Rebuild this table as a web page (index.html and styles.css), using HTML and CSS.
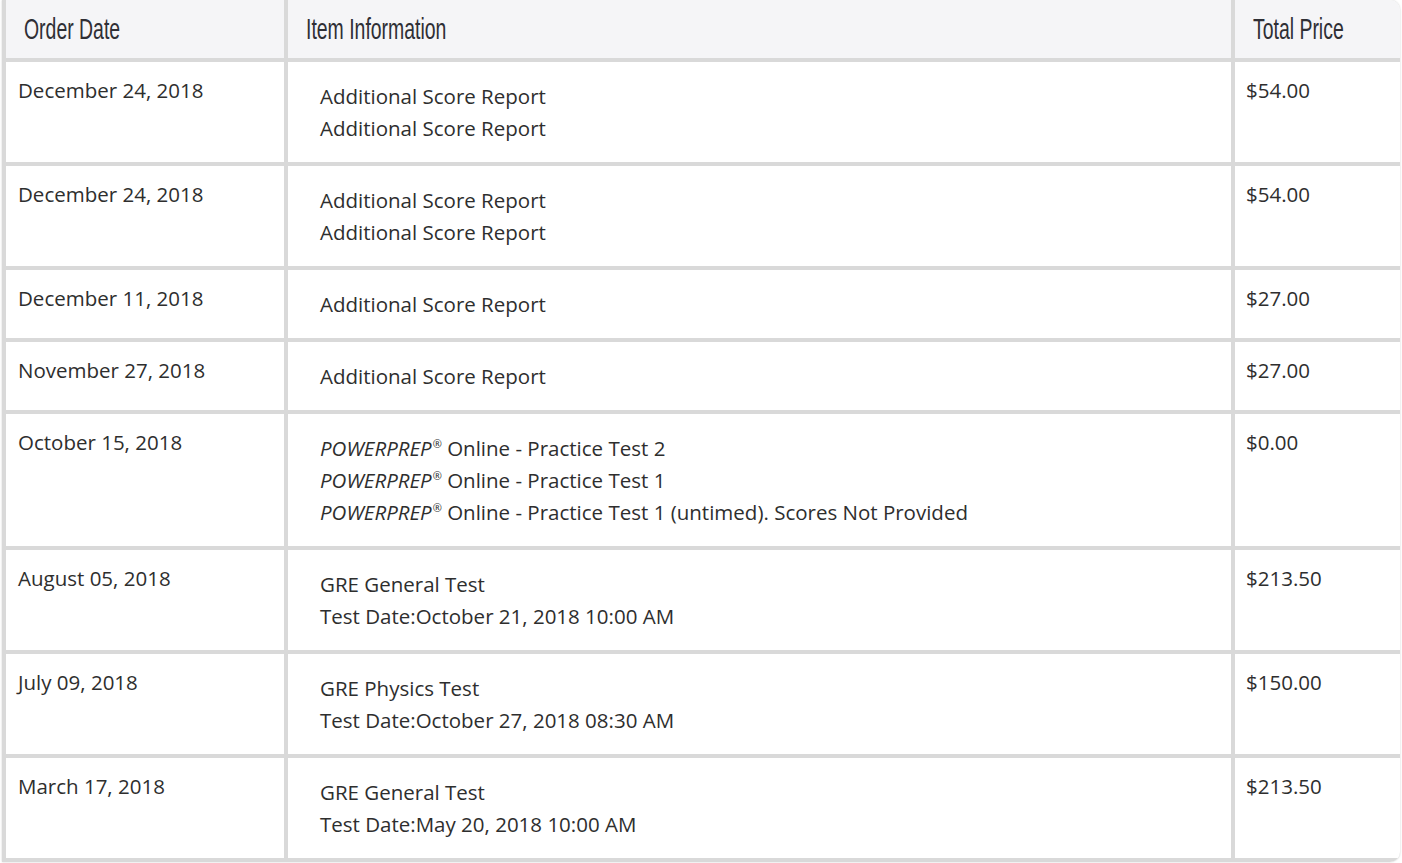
FILE: index.html
```html
<!DOCTYPE html>
<html>
<head>
<meta charset="utf-8">
<link rel="stylesheet" href="styles.css">
</head>
<body>
<div class="orders">
  <div class="grid">
    <div class="hcell"><span class="htext">Order Date</span></div>
    <div class="hcell"><span class="htext">Item Information</span></div>
    <div class="hcell last"><span class="htext">Total Price</span></div>

    <div class="cell date">December 24, 2018</div>
    <div class="cell items"><div>Additional Score Report</div><div>Additional Score Report</div></div>
    <div class="cell price last">$54.00</div>

    <div class="cell date">December 24, 2018</div>
    <div class="cell items"><div>Additional Score Report</div><div>Additional Score Report</div></div>
    <div class="cell price last">$54.00</div>

    <div class="cell date">December 11, 2018</div>
    <div class="cell items"><div>Additional Score Report</div></div>
    <div class="cell price last">$27.00</div>

    <div class="cell date">November 27, 2018</div>
    <div class="cell items"><div>Additional Score Report</div></div>
    <div class="cell price last">$27.00</div>

    <div class="cell date">October 15, 2018</div>
    <div class="cell items">
      <div><i>POWERPREP</i><sup>®</sup> Online - Practice Test 2</div>
      <div><i>POWERPREP</i><sup>®</sup> Online - Practice Test 1</div>
      <div><i>POWERPREP</i><sup>®</sup> Online - Practice Test 1 (untimed). Scores Not Provided</div>
    </div>
    <div class="cell price last">$0.00</div>

    <div class="cell date">August 05, 2018</div>
    <div class="cell items"><div>GRE General Test</div><div>Test Date:October 21, 2018 10:00 AM</div></div>
    <div class="cell price last">$213.50</div>

    <div class="cell date">July 09, 2018</div>
    <div class="cell items"><div>GRE Physics Test</div><div>Test Date:October 27, 2018 08:30 AM</div></div>
    <div class="cell price last">$150.00</div>

    <div class="cell date">March 17, 2018</div>
    <div class="cell items"><div>GRE General Test</div><div>Test Date:May 20, 2018 10:00 AM</div></div>
    <div class="cell price last">$213.50</div>
  </div>
</div>
</body>
</html>
```

FILE: styles.css
```css
html, body {
  margin: 0;
  padding: 0;
  background: #ffffff;
}

.orders {
  margin: 0 2px 2px 2px;
  width: 1398px;
  border-radius: 0 10px 10px 0;
  box-shadow: 0 0 2px rgba(0, 0, 0, 0.22);
  overflow: hidden;
  background: #ffffff;
  font-family: "Open Sans", "Noto Sans", sans-serif;
  color: #2e2e2e;
}

.grid {
  display: grid;
  grid-template-columns: 282px 947px 1fr;
  border-left: 4px solid #d9d9d9;
  box-sizing: border-box;
}

.hcell {
  height: 62px;
  box-sizing: border-box;
  background: #f5f5f7;
  border-right: 4px solid #d9d9d9;
  border-bottom: 4px solid #d9d9d9;
  padding: 11px 0 0 18px;
  overflow: hidden;
  white-space: nowrap;
}

.htext {
  display: inline-block;
  font-family: "Liberation Sans", sans-serif;
  font-size: 29px;
  line-height: 36px;
  color: #2f2f35;
  transform: scaleX(0.67);
  transform-origin: left center;
}

.cell {
  box-sizing: border-box;
  border-right: 4px solid #d9d9d9;
  border-bottom: 4px solid #d9d9d9;
  font-size: 20.5px;
  line-height: 32px;
}

.last {
  border-right: none;
}

.date,
.price {
  padding: 12px 12px 18px 12px;
}

.price {
  padding-left: 11px;
}

.items {
  padding: 18px 12px 18px 32px;
}

.items i {
  font-style: italic;
}

.items sup {
  font-size: 11px;
  line-height: 0;
  vertical-align: 0;
  position: relative;
  top: -8px;
  margin-left: 1px;
}
```
